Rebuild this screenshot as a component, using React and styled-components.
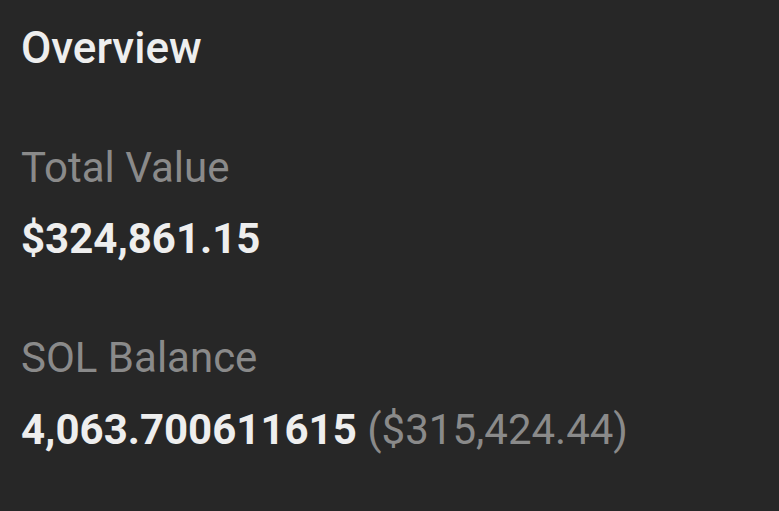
import React from "react";
import styled, { createGlobalStyle } from "styled-components";

const Global = createGlobalStyle`
  html, body { margin: 0; padding: 0; background: #272727; }
  body { font-family: Roboto, "Liberation Sans", sans-serif; }
`;

const Page = styled.div`
  width: 779px;
  height: 511px;
  background: #272727;
  box-sizing: border-box;
  padding: 22px 22px 0 21px;
  display: flex;
  flex-direction: column;
`;

const Title = styled.h1`
  margin: 0;
  font-size: 44px;
  font-weight: 500;
  line-height: 52px;
  color: #eeeeee;
`;

const Section = styled.div`
  display: flex;
  flex-direction: column;
  margin-top: ${(p) => p.$top}px;
`;

const Label = styled.div`
  font-size: 42px;
  font-weight: 400;
  line-height: 52px;
  color: #8a8a8a;
`;

const Value = styled.div`
  font-size: 42px;
  font-weight: 700;
  line-height: 52px;
  color: #eeeeee;
  margin-top: ${(p) => p.$top}px;
`;

const Sub = styled.span`
  font-weight: 400;
  color: #8a8a8a;
`;

export default function App() {
  return (
    <>
      <Global />
      <Page>
        <Title>Overview</Title>
        <Section $top={68}>
          <Label>Total Value</Label>
          <Value $top={19}>$324,861.15</Value>
        </Section>
        <Section $top={67}>
          <Label>SOL Balance</Label>
          <Value $top={20}>
            4,063.700611615 <Sub>($315,424.44)</Sub>
          </Value>
        </Section>
      </Page>
    </>
  );
}
